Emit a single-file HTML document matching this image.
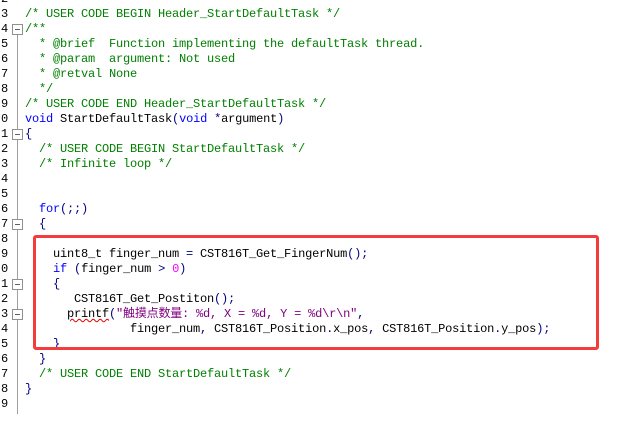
<!DOCTYPE html><html><head><meta charset="utf-8"><style>
body{margin:0;width:627px;height:409px;background:#fff;position:relative;overflow:hidden;font-family:"Liberation Mono","Noto Sans CJK SC",monospace;font-size:12px;letter-spacing:-0.2px;}
.w{position:absolute;left:0;top:2px;width:627px;height:420px}
.l{position:absolute;left:0;height:15px;line-height:15px;white-space:pre;}
.n{position:absolute;left:1px;width:10px;color:#000;}
.c{position:absolute;left:25px;color:#000;}
.g{color:#008000}.k{color:#0000ff}.o{color:#000080}.s{color:#800080}.p{color:#ff00ff}
.vl{position:absolute;left:17px;top:22px;width:1px;height:390px;background:#a0a0a0}
.fb{position:absolute;left:12px;width:9px;height:9px;border:1px solid #909090;background:#fff}
.fb:after{content:"";position:absolute;left:2px;top:4px;width:5px;height:1px;background:#606060}
.box{position:absolute;left:33px;top:235px;width:560px;height:109px;border:3px solid #f53c3c;border-radius:3px}
.sq{text-decoration:underline wavy #e00000;text-decoration-thickness:1px}
</style></head><body>
<div class="w">
<div class="vl"></div>
<div class="l" style="top:-10px"><span class="n">2</span></div>
<div class="l" style="top:5px"><span class="n">3</span><span class="c g">/* USER CODE BEGIN Header_StartDefaultTask */</span></div>
<div class="l" style="top:20px"><span class="n">4</span><span class="c g">/**</span></div>
<div class="l" style="top:35px"><span class="n">5</span><span class="c g">  * @brief  Function implementing the defaultTask thread.</span></div>
<div class="l" style="top:50px"><span class="n">6</span><span class="c g">  * @param  argument: Not used</span></div>
<div class="l" style="top:65px"><span class="n">7</span><span class="c g">  * @retval None</span></div>
<div class="l" style="top:80px"><span class="n">8</span><span class="c g">  */</span></div>
<div class="l" style="top:95px"><span class="n">9</span><span class="c g">/* USER CODE END Header_StartDefaultTask */</span></div>
<div class="l" style="top:110px"><span class="n">0</span><span class="c"><span class="k">void</span> StartDefaultTask<span class="o">(</span><span class="k">void</span> <span class="o">*</span>argument<span class="o">)</span></span></div>
<div class="l" style="top:125px"><span class="n">1</span><span class="c o">{</span></div>
<div class="l" style="top:140px"><span class="n">2</span><span class="c g">  /* USER CODE BEGIN StartDefaultTask */</span></div>
<div class="l" style="top:155px"><span class="n">3</span><span class="c g">  /* Infinite loop */</span></div>
<div class="l" style="top:170px"><span class="n">4</span></div>
<div class="l" style="top:185px"><span class="n">5</span></div>
<div class="l" style="top:200px"><span class="n">6</span><span class="c">  <span class="k">for</span><span class="o">(;;)</span></span></div>
<div class="l" style="top:215px"><span class="n">7</span><span class="c o">  {</span></div>
<div class="l" style="top:230px"><span class="n">8</span></div>
<div class="l" style="top:245px"><span class="n">9</span><span class="c">    uint8_t finger_num <span class="o">=</span> CST816T_Get_FingerNum<span class="o">();</span></span></div>
<div class="l" style="top:260px"><span class="n">0</span><span class="c">    <span class="k">if</span> <span class="o">(</span>finger_num <span class="o">&gt;</span> <span class="p">0</span><span class="o">)</span></span></div>
<div class="l" style="top:275px"><span class="n">1</span><span class="c o">    {</span></div>
<div class="l" style="top:290px"><span class="n">2</span><span class="c">       CST816T_Get_Postiton<span class="o">();</span></span></div>
<div class="l" style="top:305px"><span class="n">3</span><span class="c">      <span class="sq">printf</span><span class="o">(</span><span class="s">"触摸点数量: %d, X = %d, Y = %d\r\n"</span><span class="o">,</span></span></div>
<div class="l" style="top:320px"><span class="n">4</span><span class="c">               finger_num<span class="o">,</span> CST816T_Position<span class="o">.</span>x_pos<span class="o">,</span> CST816T_Position<span class="o">.</span>y_pos<span class="o">);</span></span></div>
<div class="l" style="top:335px"><span class="n">5</span><span class="c o">    }</span></div>
<div class="l" style="top:350px"><span class="n">6</span><span class="c o">  }</span></div>
<div class="l" style="top:365px"><span class="n">7</span><span class="c g">  /* USER CODE END StartDefaultTask */</span></div>
<div class="l" style="top:380px"><span class="n">8</span><span class="c o">}</span></div>
<div class="l" style="top:395px"><span class="n">9</span></div>
<div class="fb" style="top:22px"></div>
<div class="fb" style="top:127px"></div>
<div class="fb" style="top:217px"></div>
<div class="fb" style="top:277px"></div>
<div class="fb" style="top:307px"></div>
</div>
<div class="box"></div>
</body></html>
